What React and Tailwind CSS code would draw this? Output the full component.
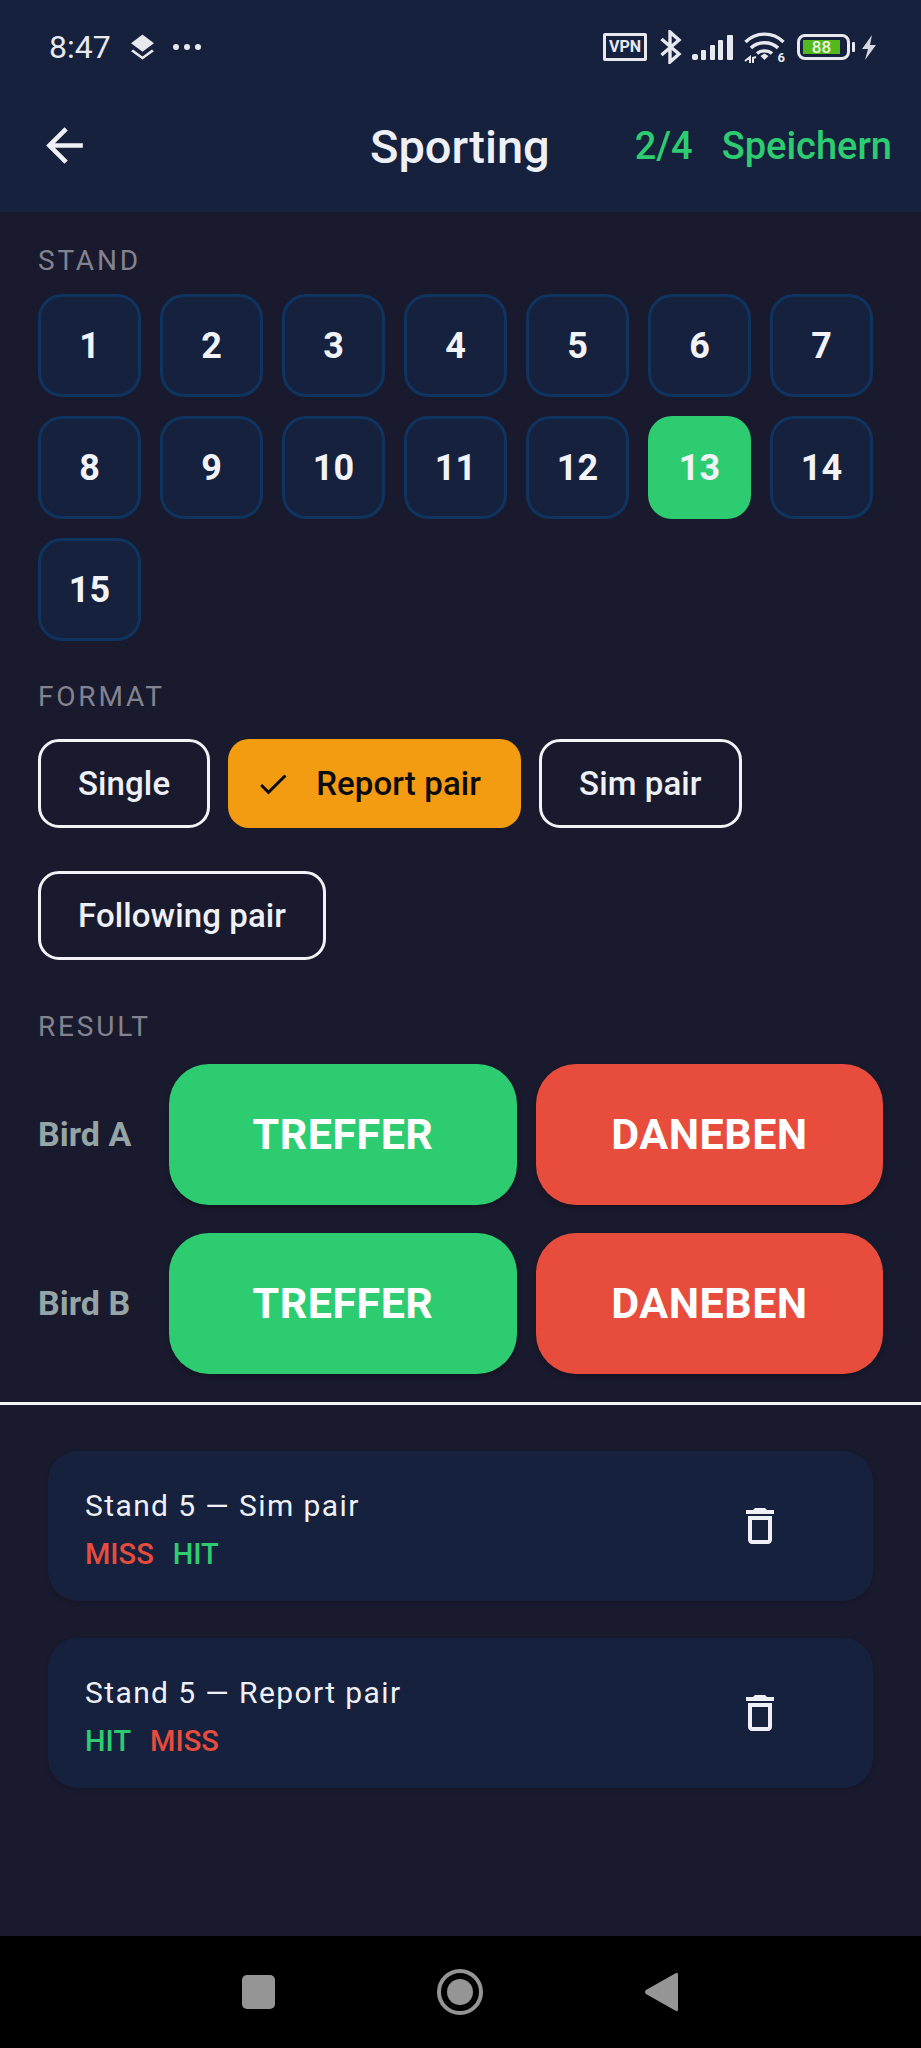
const STANDS = [1, 2, 3, 4, 5, 6, 7, 8, 9, 10, 11, 12, 13, 14, 15];

function StatusBar() {
  return (
    <div className="flex h-[90px] items-start justify-between pl-[49px] pr-[44px] pt-[28px] text-[#e8e9ee]">
      <div className="flex items-center">
        <span className="text-[32px] leading-[38px] font-normal">8:47</span>
        <svg className="ml-[19px] h-[26px] w-[25px]" viewBox="0 0 24 24" fill="currentColor">
          <path d="M12 0 L23 8.5 L12 16.5 L1 8.5 Z" />
          <path d="M3 14.5 L12 21 L21 14.5 L23 16 L12 24 L1 16 Z" />
        </svg>
        <div className="ml-[18px] flex items-center gap-[5px]">
          <span className="h-[6px] w-[6px] rounded-full bg-[#e8e9ee]" />
          <span className="h-[6px] w-[6px] rounded-full bg-[#e8e9ee]" />
          <span className="h-[6px] w-[6px] rounded-full bg-[#e8e9ee]" />
        </div>
      </div>
      <div className="flex items-center pt-[2px]">
        <div className="flex h-[28px] w-[44px] items-center justify-center rounded-[2px] border-[3px] border-[#e8e9ee] text-[16px] leading-none font-bold">
          VPN
        </div>
        <svg className="ml-[13px] h-[34px] w-[22px]" viewBox="0 0 22 34" fill="none" stroke="currentColor" strokeWidth="3.4">
          <path d="M1.5 9 L19 24 L10 32 V2 L19 10 L1.5 25" />
        </svg>
        <svg className="ml-[10px] h-[27px] w-[42px]" viewBox="0 0 42 27" fill="currentColor">
          <rect x="0" y="20" width="6" height="6" rx="2" />
          <rect x="9" y="16" width="5" height="10" rx="1" />
          <rect x="18" y="11" width="5" height="15" rx="1" />
          <rect x="26" y="6" width="5" height="20" rx="1" />
          <rect x="35" y="1" width="6" height="25" rx="1" />
        </svg>
        <div className="relative ml-[10px] h-[31px] w-[41px]">
          <svg className="h-[31px] w-[41px]" viewBox="0 0 41 31" fill="none" stroke="currentColor" strokeWidth="3.4">
            <path d="M1.5 10 C12 -0.5 29 -0.5 39.5 10" />
            <path d="M7 16 C14 9 27 9 34 16" />
            <path d="M13 21.5 C17 18 24 18 28 21.5" />
            <path d="M16.5 24 L20.5 21.5 L24.5 24 L20.5 28 Z" fill="currentColor" stroke="none" />
            <path d="M1 29 L6 25 V31 M9 25 V31 M9 26 L12 25" strokeWidth="2" />
          </svg>
          <span className="absolute right-0 top-[20px] text-[13px] leading-[12px] font-bold">6</span>
        </div>
        <div className="ml-[12px] flex items-center">
          <div className="flex h-[26px] w-[53px] items-center rounded-[8px] border-[3px] border-[#e8e9ee] p-[3px]">
            <div className="flex h-full w-[37px] items-center justify-center bg-[#54b81f] text-[17px] leading-none font-medium text-[#e9f7dc]">
              88
            </div>
          </div>
          <div className="ml-[2px] h-[10px] w-[3px] rounded-[1px] bg-[#e8e9ee]" />
        </div>
        <svg className="ml-[6px] h-[25px] w-[16px]" viewBox="0 0 16 25" fill="#d5d7dc">
          <path d="M11 0 L1 14 H7 L4 25 L15 10 H9 Z" />
        </svg>
      </div>
    </div>
  );
}

function AppBar() {
  return (
    <div className="relative flex h-[122px] items-start pl-[37px] pr-[29px] pt-[28px]">
      <svg className="h-[55px] w-[55px] text-[#eef0f5]" viewBox="0 0 24 24" fill="currentColor">
        <path d="M20 11H7.83l5.59-5.59L12 4l-8 8 8 8 1.41-1.41L7.83 13H20v-2z" />
      </svg>
      <div className="absolute left-[370px] top-[30px] text-[47px] leading-[54px] font-medium text-[#eef0f5]">Sporting</div>
      <div className="ml-auto flex items-center gap-[29px] pt-[6px] text-[38px] leading-[44px] font-medium text-[#2ecc71]">
        <span>2/4</span>
        <span>Speichern</span>
      </div>
    </div>
  );
}

function SectionLabel({ children, className }) {
  return <div className={`text-[28px] leading-[32px] font-normal tracking-[2.8px] text-[#83838f] ${className}`}>{children}</div>;
}

function StandGrid() {
  return (
    <div className="mt-[17px] grid grid-cols-[repeat(7,103px)] gap-[19px]">
      {STANDS.map((n) =>
        n === 13 ? (
          <div key={n} className="flex h-[103px] items-center justify-center rounded-[24px] bg-[#2ecc71] text-[36px] font-bold text-[#f1f3f7]">
            {n}
          </div>
        ) : (
          <div key={n} className="flex h-[103px] items-center justify-center rounded-[24px] border-[3px] border-[#0f3460] bg-[#16213e] text-[36px] font-bold text-[#f1f3f7]">
            {n}
          </div>
        ),
      )}
    </div>
  );
}

function Chip({ children }) {
  return (
    <div className="flex h-[89px] items-center rounded-[21px] border-[3px] border-[#f1f3f7] px-[37px] text-[33px] font-medium tracking-[0.1px] text-[#eef0f5]">
      {children}
    </div>
  );
}

function FormatChips() {
  return (
    <div className="mt-[26px] flex flex-wrap gap-x-[18px] gap-y-[43px]">
      <Chip>Single</Chip>
      <div className="flex h-[89px] items-center rounded-[21px] bg-[#f39c12] pl-[27px] pr-[40px] text-[33px] font-medium tracking-[0.1px] text-[#0c0c10]">
        <svg className="h-[36px] w-[36px]" viewBox="0 0 24 24" fill="currentColor">
          <path d="M9 16.17L4.83 12l-1.42 1.41L9 19 21 7l-1.41-1.41z" />
        </svg>
        <span className="ml-[25px]">Report pair</span>
      </div>
      <Chip>Sim pair</Chip>
      <Chip>Following pair</Chip>
    </div>
  );
}

function ResultRow({ label }) {
  return (
    <div className="flex items-center">
      <div className="w-[131px] text-[34px] font-bold text-[#95a5a6]">{label}</div>
      <div className="flex gap-[19px]">
        <div className="flex h-[141px] w-[348px] items-center justify-center rounded-[40px] bg-[#2ecc71] text-[43px] font-bold tracking-[0.5px] text-white shadow-[0_3px_5px_rgba(0,0,0,0.25)]">
          TREFFER
        </div>
        <div className="flex h-[141px] w-[347px] items-center justify-center rounded-[40px] bg-[#e74c3c] text-[43px] font-bold tracking-[0.5px] text-white shadow-[0_3px_5px_rgba(0,0,0,0.25)]">
          DANEBEN
        </div>
      </div>
    </div>
  );
}

function HistoryCard({ title, results }) {
  return (
    <div className="flex h-[150px] items-center justify-between rounded-[30px] bg-[#16213e] pl-[37px] pr-[89px] shadow-[0_2px_4px_rgba(0,0,0,0.15)]">
      <div className="pt-[8px]">
        <div className="text-[30px] leading-[36px] font-normal tracking-[1.4px] text-[#eef0f5]">{title}</div>
        <div className="mt-[12px] flex gap-[19px] text-[29px] leading-[36px] font-medium">
          {results.map((r, i) => (
            <span key={i} className={r === "HIT" ? "text-[#2ecc71]" : "text-[#e74c3c]"}>
              {r}
            </span>
          ))}
        </div>
      </div>
      <svg className="h-[48px] w-[48px] text-[#eef0f5]" viewBox="0 0 24 24" fill="currentColor">
        <path d="M6 19c0 1.1.9 2 2 2h8c1.1 0 2-.9 2-2V7H6v12zM8 9h8v10H8V9zm7.5-5l-1-1h-5l-1 1H5v2h14V4z" />
      </svg>
    </div>
  );
}

function NavBar() {
  return (
    <div className="flex h-[112px] items-center justify-center gap-[162px] bg-black pr-[2px]">
      <div className="h-[34px] w-[33px] rounded-[5px] bg-[#959595]" />
      <div className="flex h-[46px] w-[46px] items-center justify-center rounded-full border-[4px] border-[#959595]">
        <div className="h-[26px] w-[26px] rounded-full bg-[#959595]" />
      </div>
      <svg className="h-[40px] w-[33px]" viewBox="0 0 33 40" fill="#959595">
        <path d="M31 1 Q33 0 33 3 V37 Q33 40 31 39 L1 22 Q-1 20 1 18 Z" />
      </svg>
    </div>
  );
}

export default function App() {
  return (
    <div className="flex h-[2048px] w-[921px] flex-col overflow-hidden bg-[#1a1a2e] font-['Roboto',sans-serif]">
      <div className="h-[212px] bg-[#16213e]">
        <StatusBar />
        <AppBar />
      </div>
      <div className="flex-1 pt-[33px]">
        <div className="pl-[38px] pr-[38px]">
          <SectionLabel>STAND</SectionLabel>
          <StandGrid />
          <SectionLabel className="mt-[40px]">FORMAT</SectionLabel>
          <FormatChips />
          <SectionLabel className="mt-[51px]">RESULT</SectionLabel>
          <div className="mt-[21px] flex flex-col gap-[28px]">
            <ResultRow label="Bird A" />
            <ResultRow label="Bird B" />
          </div>
        </div>
        <div className="mt-[28px] h-[3px] bg-[#f1f3f7]" />
        <div className="mt-[46px] flex flex-col gap-[37px] pl-[48px] pr-[48px]">
          <HistoryCard title="Stand 5 — Sim pair" results={["MISS", "HIT"]} />
          <HistoryCard title="Stand 5 — Report pair" results={["HIT", "MISS"]} />
        </div>
      </div>
      <NavBar />
    </div>
  );
}
